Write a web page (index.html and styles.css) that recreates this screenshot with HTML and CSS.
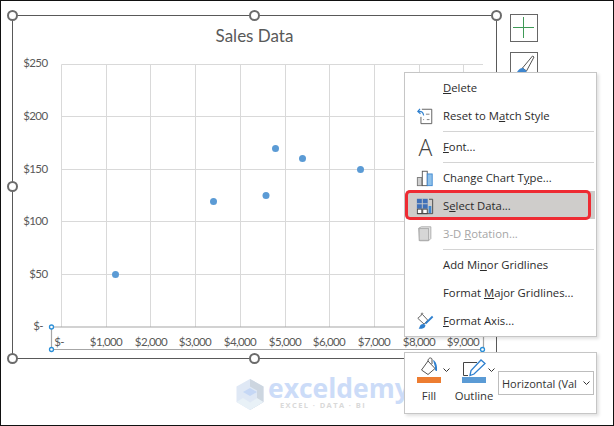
FILE: index.html
```html
<!DOCTYPE html>
<html lang="en">
<head>
<meta charset="utf-8">
<title>Select Data</title>
<link rel="stylesheet" href="styles.css">
</head>
<body>
<div class="stage">
  <svg class="chart" width="614" height="426" viewBox="0 0 614 426">
    <g class="grid">
      <path d="M61.5 64.5H483M61.5 116.5H483M61.5 169.5H483M61.5 221.5H483M61.5 274.5H483"/>
      <path d="M61.5 64.5V327M106.5 64.5V327M150.5 64.5V327M195.5 64.5V327M240.5 64.5V327M285.5 64.5V327M329.5 64.5V327M374.5 64.5V327M419.5 64.5V327M463.5 64.5V327"/>
    </g>
    <path class="axis" d="M51.5 327H483M51.5 349.5H483M51.5 327V349M483.5 327V349"/>
    <g class="dots">
      <circle cx="115.500" cy="274.500" r="3.500"/><circle cx="213.500" cy="201.500" r="3.500"/>
      <circle cx="266" cy="195.500" r="3.500"/><circle cx="275.500" cy="148.500" r="3.500"/>
      <circle cx="302.500" cy="158.500" r="3.500"/><circle cx="360.500" cy="169.500" r="3.500"/>
    </g>
    <g class="ylabels">
      <text x="47.500" y="67">$250</text><text x="47.500" y="120">$200</text><text x="47.500" y="173">$150</text>
      <text x="47.500" y="225">$100</text><text x="47.500" y="278">$50</text><text x="43" y="330">$-</text>
    </g>
    <g class="xlabels">
      <text x="59" y="346">$-</text><text x="106" y="346">$1,000</text><text x="151" y="346">$2,000</text>
      <text x="195" y="346">$3,000</text><text x="240" y="346">$4,000</text><text x="285" y="346">$5,000</text>
      <text x="329" y="346">$6,000</text><text x="374" y="346">$7,000</text><text x="419" y="346">$8,000</text>
      <text x="463" y="346">$9,000</text>
    </g>
    <text class="title" x="254.500" y="42">Sales Data</text>
    <rect class="frame" x="12.500" y="15.500" width="484" height="343"/>
    <g class="handles">
      <circle cx="12.500" cy="15.500" r="4.500"/><circle cx="254.500" cy="15.500" r="4.500"/><circle cx="496.500" cy="15.500" r="4.500"/>
      <circle cx="12.500" cy="186.500" r="4.500"/><circle cx="496.500" cy="186.500" r="4.500"/>
      <circle cx="12.500" cy="358.500" r="4.500"/><circle cx="254.500" cy="358.500" r="4.500"/>
    </g>
    <g class="axis-handles">
      <circle cx="51.500" cy="327" r="2"/><circle cx="51.500" cy="349.500" r="2"/><circle cx="482.500" cy="349.500" r="2"/>
    </g>
    <g class="logo">
      <path class="hex-a" d="M250 379l13.500 7.500v15.500l-13.500 8-13.500-8v-15.500z"/>
      <path class="hex-b" d="M250 379l13.500 7.500v15.500l-13.500 8v-7l7-4.500v-8l-7-4z"/>
      <path class="hex-c" d="M236.500 402l13.500 8 13.500-8-6.500-4-7 4.500-7-4.500z"/>
      <path class="hex-d" d="M250 388l7 4-7 4-7-4z"/>
    </g>
    <text class="wm-main" x="268" y="398">exceldemy</text>
    <text class="wm-sub" x="280" y="408">EXCEL · DATA · BI</text>
    <rect class="side-btn" x="510.500" y="14.500" width="27" height="27"/>
    <path class="plus" d="M523.500 17V38M513 27.500H534"/>
    <rect class="side-btn" x="510.500" y="52.500" width="27" height="27"/>
    <path class="brush-body" d="M534 57l-1.500-1-10 12 4 3z"/>
    <path class="brush-tip" d="M517 72c2-3 4-4.500 6-4l3.500 3c0 3-2 5-4 5h-6z"/>
  </svg>

  <div class="menu">
    <div class="item"><span class="ico"></span><span><u>D</u>elete</span></div>
    <div class="item">
      <span class="ico">
        <svg width="18" height="18" viewBox="0 0 20 20"><path class="i-line" d="M6.500 2.500H17.500V18.500H5.500V11"/><path class="i-dash" d="M11 8h4M8 14h1M12 14h3"/><path class="i-blue" d="M8.500 9.500C8 5.500 6 4.500 2.500 5M4.500 2L2 5l3 2.500"/></svg>
      </span>
      <span>Reset to M<u>a</u>tch Style</span>
    </div>
    <div class="sep"></div>
    <div class="item">
      <span class="ico ico-letter">A</span>
      <span><u>F</u>ont...</span>
    </div>
    <div class="sep"></div>
    <div class="item">
      <span class="ico">
        <svg width="18" height="18" viewBox="0 0 20 20"><rect class="b-gray" x="1.500" y="9.500" width="5" height="9"/><rect class="b-white" x="7" y="2.500" width="5.500" height="16"/><rect class="b-blue" x="12.500" y="5.500" width="5.500" height="13"/></svg>
      </span>
      <span>Change Chart T<u>y</u>pe...</span>
    </div>
    <div class="item item-active">
      <span class="ico">
        <svg width="18" height="18" viewBox="0 0 20 20"><rect class="d-blue" x="1" y="2" width="12" height="11"/><path class="d-white" d="M1 7.500H13M7 2V13"/><rect class="d-cell" x="1.500" y="13.500" width="5" height="5"/><rect class="d-cell" x="7.500" y="13.500" width="5" height="5"/><path class="d-dark" d="M14.500 2.500H18.500V18.500H1.500"/><rect class="d-bar" x="14" y="10" width="3" height="8"/></svg>
      </span>
      <span>S<u>e</u>lect Data...</span>
    </div>
    <div class="item item-off">
      <span class="ico">
        <svg width="18" height="18" viewBox="0 0 20 20"><path class="r-side" d="M3 3.500L6 2H16.500V15L14 17.500H4z"/><rect class="r-front" x="3.500" y="4" width="10.500" height="13"/></svg>
      </span>
      <span>3-D <u>R</u>otation...</span>
    </div>
    <div class="sep"></div>
    <div class="item"><span class="ico"></span><span>Add Mi<u>n</u>or Gridlines</span></div>
    <div class="item"><span class="ico"></span><span>Format <u>M</u>ajor Gridlines...</span></div>
    <div class="item">
      <span class="ico">
        <svg width="18" height="18" viewBox="0 0 20 20"><path class="i-line" d="M2 7l5-4.500 6 6.500-4 4.500z"/><path class="i-line" d="M6 3c-1-1.500 1-2.500 2-1"/><path class="i-blue2" d="M18.500 5l-8 8"/><path class="i-bluefill" d="M5 14.500c2-1.500 4-1.500 5.500 0 0 2.500-2 4-4 4H3z"/></svg>
      </span>
      <span><u>F</u>ormat Axis...</span>
    </div>
  </div>

  <div class="redbox"></div>

  <div class="mini">
    <div class="tool">
      <div class="tool-top">
        <div class="tool-icon">
          <svg width="24" height="20" viewBox="0 0 24 20"><path class="i-line" d="M4.500 13L11 4l7 7.500-7 6z"/><path class="i-line" d="M11 4c0-3 3-4 4-2v5"/><path class="i-bluefill" d="M16 3c3 1 4.500 6 4 11-1.500.5-2.500-1-2-4z"/></svg>
          <span class="swatch swatch-orange"></span>
        </div>
        <svg class="chev" width="7" height="4" viewBox="0 0 7 4"><path d="M.5.500l3 3 3-3"/></svg>
      </div>
      <span class="tool-label">Fill</span>
    </div>
    <div class="tool tool-narrow">
      <div class="tool-top">
        <div class="tool-icon">
          <svg width="24" height="20" viewBox="0 0 24 20"><path class="o-frame" d="M1.500 18.500V5.500H15M1.500 18.500H6"/><path class="o-pen" d="M8 18.500l1-5L19 3l4 3.500L12 17z"/></svg>
          <span class="swatch swatch-blue"></span>
        </div>
        <svg class="chev" width="7" height="4" viewBox="0 0 7 4"><path d="M.5.500l3 3 3-3"/></svg>
      </div>
      <span class="tool-label">Outline</span>
    </div>
    <div class="combo">
      <span>Horizontal (Val</span>
      <svg class="chev" width="7" height="4" viewBox="0 0 7 4"><path d="M.5.500l3 3 3-3"/></svg>
    </div>
  </div>
</div>
</body>
</html>
```
FILE: styles.css
```css
* { box-sizing: border-box; }
html, body { margin: 0; padding: 0; background: #fff; }
.stage {
  position: relative;
  width: 614px;
  height: 426px;
  overflow: hidden;
  background: #fff;
  border: 1px solid #111;
}
.chart { position: absolute; left: -1px; top: -1px; }
.grid path { fill: none; stroke: #d9d9d9; stroke-width: 1; }
.axis { fill: none; stroke: #a6a6a6; stroke-width: 1.2; }
.dots circle { fill: #5b9bd5; }
.ylabels text, .xlabels text { font: 11.500px Lato, "Liberation Sans", sans-serif; fill: #595959; letter-spacing: -.6px; }
.ylabels text { text-anchor: end; }
.xlabels text { text-anchor: middle; }
.title { font: 17px Lato, "Liberation Sans", sans-serif; fill: #595959; text-anchor: middle; }
.frame { fill: none; stroke: #595959; stroke-width: 1; }
.handles circle { fill: #fff; stroke: #6b6b6b; stroke-width: 2; }
.axis-handles circle { fill: #fff; stroke: #2b8fd8; stroke-width: 1.3; }
.hex-a { fill: #dfe8f5; }
.hex-b { fill: #cdd6e0; }
.hex-c { fill: #e8f1f7; }
.hex-d { fill: #c5d7f5; }
.wm-main { font: 700 26.500px "Open Sans", "Liberation Sans", sans-serif; fill: #ccdcf8; }
.wm-sub { font: 700 7.500px "Open Sans", "Liberation Sans", sans-serif; fill: #d9d9d9; letter-spacing: 1.400px; }
.side-btn { fill: #fff; stroke: #666; stroke-width: 1; }
.plus { fill: none; stroke: #3f9a57; stroke-width: 1; }
.brush-body { fill: #fff; stroke: #555; stroke-width: 1; }
.brush-tip { fill: #3f87d0; }

.menu {
  position: absolute;
  left: 403px;
  top: 71px;
  width: 193px;
  height: 265px;
  padding: 0 1px;
  background: #fff;
  border: 1px solid #c6c6c6;
  box-shadow: 2px 2px 3px rgba(0, 0, 0, .12);
  font: 11.300px "Open Sans", "Liberation Sans", sans-serif;
  color: #2b2b2b;
}
.item { display: flex; align-items: center; height: 28px; padding-top: 1px; }
.ico {
  display: flex;
  align-items: center;
  justify-content: center;
  flex: none;
  width: 37px;
  height: 27px;
}
.ico-letter { font-size: 23px; color: #444; font-weight: 300; padding-left: 2px; }
.sep { height: 3px; margin-left: 37px; margin-right: 1px; padding-top: 2px; }
.sep::before { content: ""; display: block; height: 1px; background: #d4d4d4; }
.item-active { background: #cfcdcb; }
.item-off { color: #a6a6a6; }

.i-line { fill: none; stroke: #555; stroke-width: 1; }
.i-dash { fill: none; stroke: #777; stroke-width: 1; }
.i-blue { fill: none; stroke: #2f80cf; stroke-width: 1.300; }
.i-blue2 { fill: none; stroke: #2f80cf; stroke-width: 2; }
.i-bluefill { fill: #2f80cf; }
.b-gray { fill: #cfcfcf; stroke: #777; }
.b-white { fill: #fff; stroke: #555; }
.b-blue { fill: #8fc1ea; stroke: #3f87d0; }
.d-blue { fill: #3f70b8; }
.d-white { fill: none; stroke: #cfcdcb; stroke-width: 1; }
.d-cell { fill: #fff; stroke: #444; }
.d-dark { fill: none; stroke: #444; }
.d-bar { fill: #3f87d0; }
.r-side { fill: #e4e4e4; stroke: #a8a8a8; }
.r-front { fill: #d6d6d6; stroke: #a8a8a8; }

.redbox {
  position: absolute;
  left: 404px;
  top: 189px;
  width: 186px;
  height: 30px;
  border: 3px solid #ee2b33;
  border-radius: 5px;
}

.mini {
  position: absolute;
  left: 403px;
  top: 351px;
  width: 193px;
  height: 62px;
  display: flex;
  align-items: flex-start;
  padding: 4px 2px 0 12px;
  background: #fff;
  border: 1px solid #c6c6c6;
  box-shadow: 2px 2px 3px rgba(0, 0, 0, .12);
  font: 11.300px "Open Sans", "Liberation Sans", sans-serif;
  color: #333;
}
.tool { display: flex; flex-direction: column; align-items: flex-start; width: 45px; flex: none; }
.tool-narrow { width: 36px; }
.tool-top { display: flex; align-items: center; gap: 2px; }
.tool-icon { display: flex; flex-direction: column; width: 24px; }
.tool-icon svg { display: block; }
.swatch { display: block; height: 6px; width: 24px; }
.swatch-orange { background: #ed7d31; }
.swatch-blue { background: #5b9bd5; }
.tool-label { display: flex; justify-content: center; width: 24px; margin-top: 5px; line-height: 16px; white-space: nowrap; }
.chev { flex: none; fill: none; stroke: #333; stroke-width: 1; }
.o-frame { fill: none; stroke: #444; stroke-width: 1; }
.o-pen { fill: #fff; stroke: #2f80cf; stroke-width: 1.300; }
.combo {
  display: flex;
  align-items: center;
  justify-content: space-between;
  flex: none;
  width: 96px;
  height: 24px;
  margin-top: 14px;
  padding: 0 3px 0 3px;
  border: 1px solid #bdbdbd;
  font-size: 11px;
  white-space: nowrap;
  overflow: hidden;
}
```
